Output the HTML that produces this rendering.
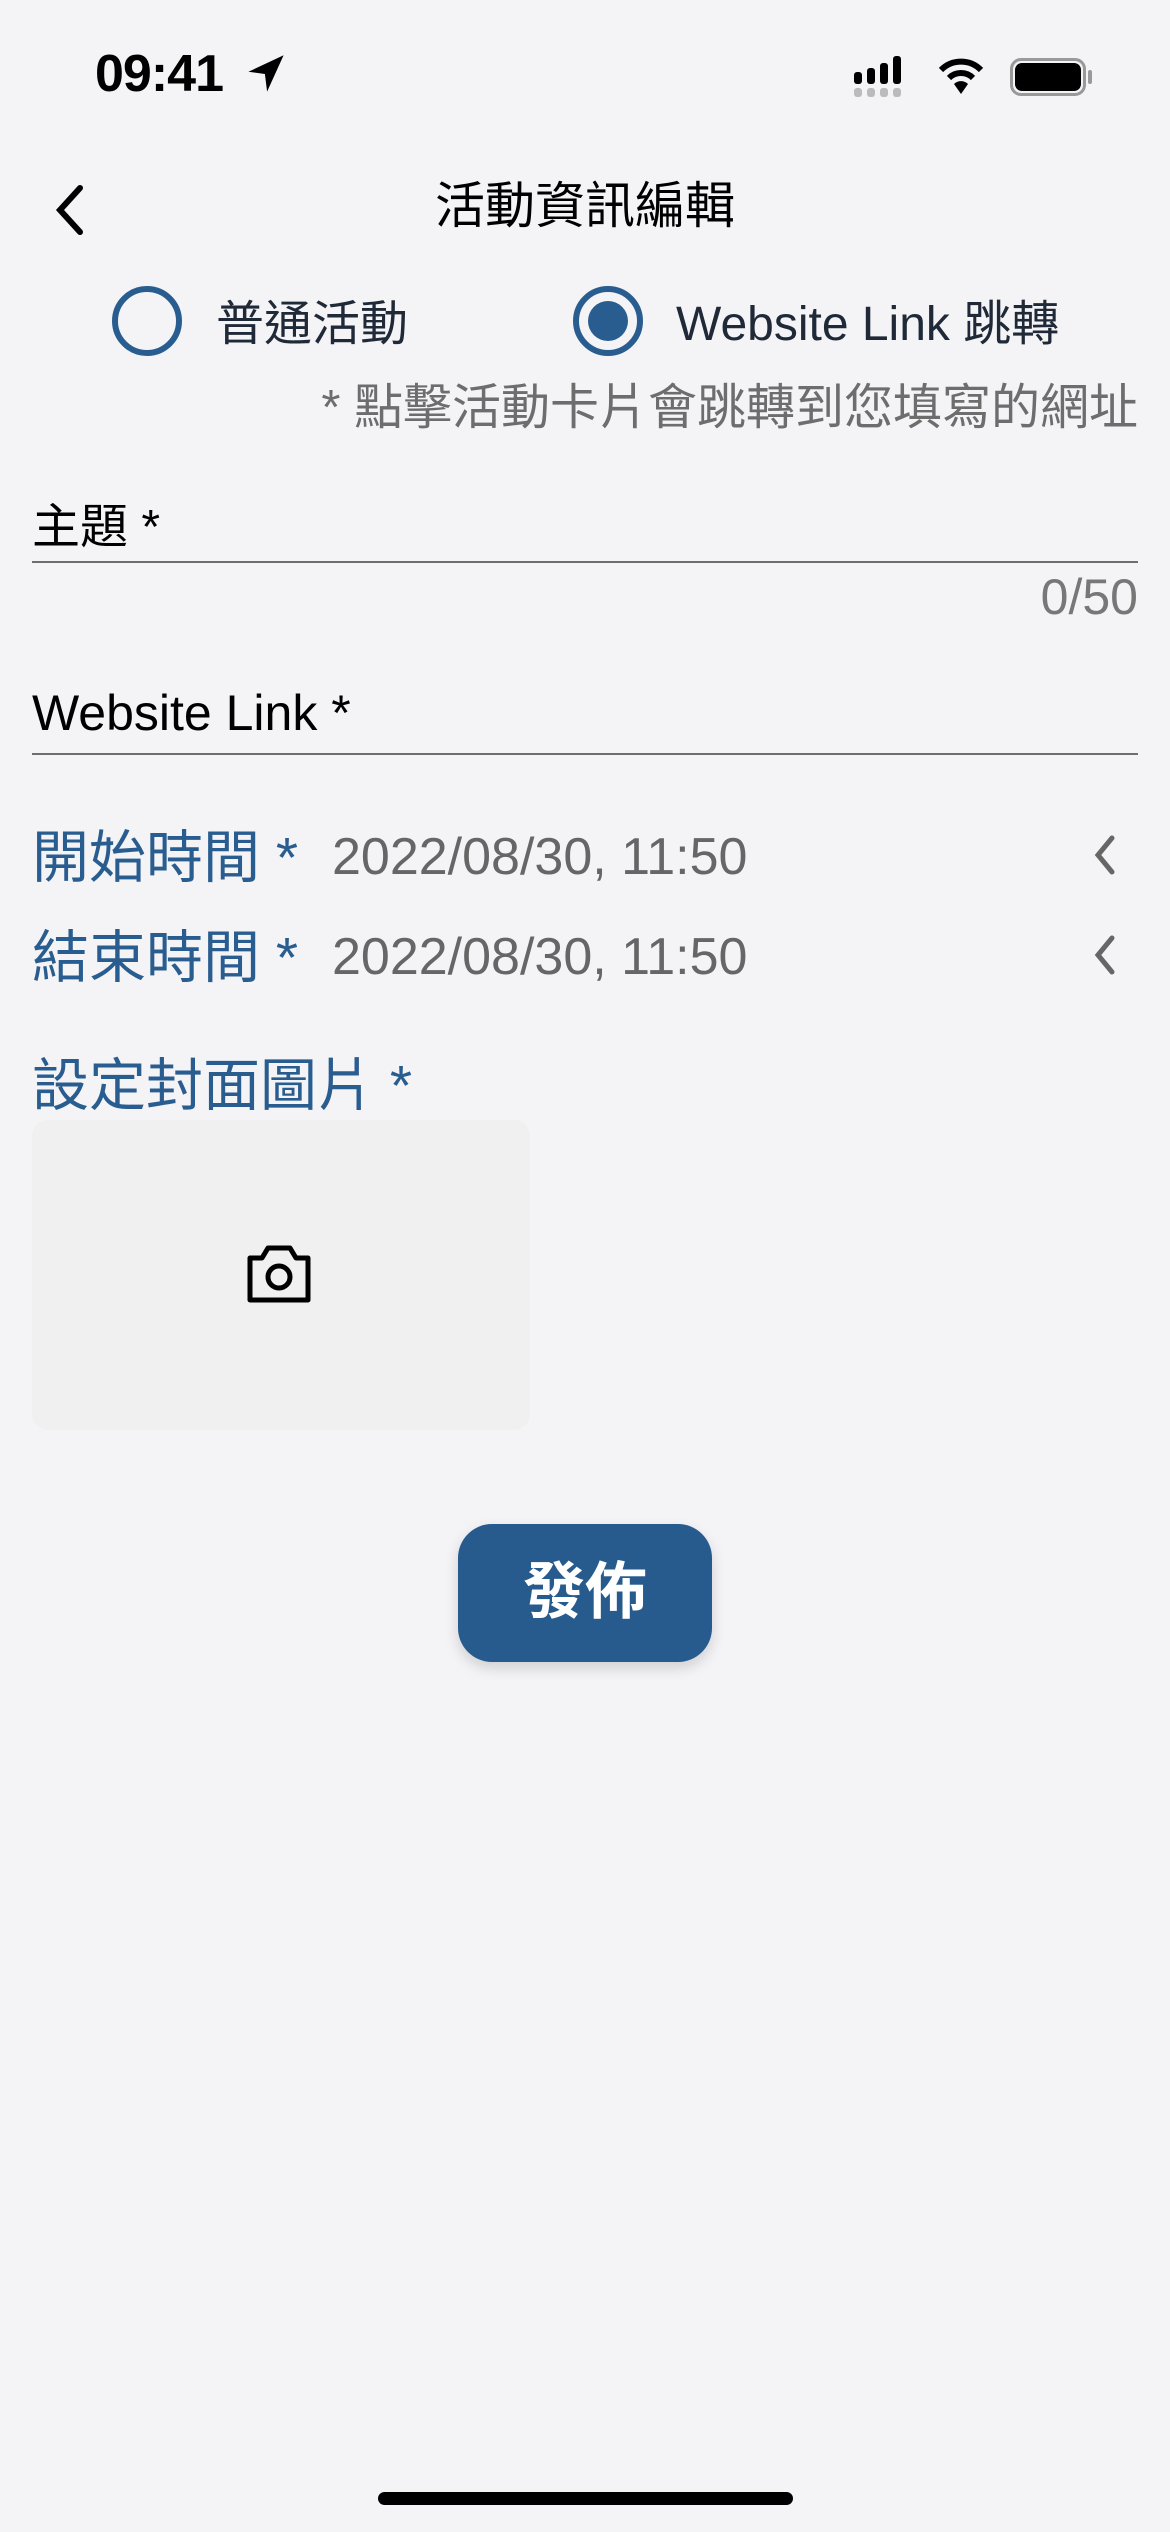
<!DOCTYPE html>
<html><head><meta charset="utf-8"><style>
*{margin:0;padding:0;box-sizing:border-box}
body{width:1170px;height:2532px;background:#f4f4f7;position:relative;overflow:hidden;font-family:"Liberation Sans","Noto Sans CJK TC",sans-serif}
.a{position:absolute;white-space:nowrap}
.line{position:absolute;left:32px;width:1106px;height:2px;background:#6e6e6e}
.blue{color:#2a5d8f}
.grey{color:#666}
</style></head><body>
<div class="a" style="left:95px;top:44px;font-size:52px;font-weight:bold;color:#000;letter-spacing:-1px">09:41</div>
<svg class="a" style="left:244px;top:52px" width="44" height="44" viewBox="0 0 40 40"><path d="M36 3 L4 18 L19 20 L21 36 Z" fill="#000"/></svg>
<svg class="a" style="left:854px;top:56px" width="62" height="42" viewBox="0 0 62 42"><rect x="0" y="16" width="8" height="12" rx="3" fill="#000"/><rect x="13" y="12" width="8" height="16" rx="3" fill="#000"/><rect x="26" y="7" width="8" height="21" rx="3" fill="#000"/><rect x="39" y="0" width="8" height="28" rx="3" fill="#000"/><rect x="0" y="32" width="8" height="9" rx="3" fill="#bbb"/><rect x="13" y="32" width="8" height="9" rx="3" fill="#bbb"/><rect x="26" y="32" width="8" height="9" rx="3" fill="#bbb"/><rect x="39" y="32" width="8" height="9" rx="3" fill="#bbb"/></svg>
<svg class="a" style="left:938px;top:56px" width="46" height="40" viewBox="0 0 46 40"><path d="M3 14 A28 28 0 0 1 43 14" stroke="#000" stroke-width="6" fill="none"/><path d="M11 22 A17 17 0 0 1 35 22" stroke="#000" stroke-width="6" fill="none"/><path d="M16 28 L23 38 L30 28 A10 10 0 0 0 16 28Z" fill="#000"/></svg>
<div class="a" style="left:1010px;top:58px;width:76px;height:38px;border:3px solid #999;border-radius:11px"></div>
<div class="a" style="left:1015px;top:63px;width:66px;height:28px;background:#000;border-radius:7px"></div>
<div class="a" style="left:1088px;top:70px;width:4px;height:14px;background:#999;border-radius:2px"></div>

<svg class="a" style="left:48px;top:182px" width="40" height="56" viewBox="0 0 40 56"><path d="M32 6 L12 28 L32 50" stroke="#000" stroke-width="6" fill="none" stroke-linecap="round"/></svg>
<div class="a" style="left:0;width:1170px;text-align:center;top:166px;font-size:50px;color:#000">活動資訊編輯</div>

<div class="a" style="left:112px;top:286px;width:70px;height:70px;border:6px solid #2a5d8f;border-radius:50%"></div>
<div class="a" style="left:216px;top:284px;font-size:48px;color:#1f2937">普通活動</div>
<div class="a" style="left:573px;top:286px;width:70px;height:70px;border:6px solid #2a5d8f;border-radius:50%"></div>
<div class="a" style="left:588px;top:301px;width:40px;height:40px;background:#2a5d8f;border-radius:50%"></div>
<div class="a" style="left:676px;top:284px;font-size:48px;color:#1f2937">Website Link 跳轉</div>
<div class="a" style="right:32px;top:368px;font-size:49px;color:#6d6d6d">* 點擊活動卡片會跳轉到您填寫的網址</div>

<div class="a" style="left:32px;top:487px;font-size:48px;color:#000">主題 *</div>
<div class="line" style="top:561px"></div>
<div class="a" style="right:32px;top:568px;font-size:50px;color:#777">0/50</div>
<div class="a" style="left:32px;top:684px;font-size:50px;color:#000">Website Link *</div>
<div class="line" style="top:753px"></div>

<div class="a blue" style="left:32px;top:812px;font-size:57px">開始時間 *</div>
<div class="a grey" style="left:332px;top:827px;font-size:52px">2022/08/30, 11:50</div>
<svg class="a" style="left:1090px;top:832px" width="30" height="46" viewBox="0 0 30 46"><path d="M22 6 L8 23 L22 40" stroke="#666" stroke-width="5" fill="none" stroke-linecap="round"/></svg>
<div class="a blue" style="left:32px;top:912px;font-size:57px">結束時間 *</div>
<div class="a grey" style="left:332px;top:927px;font-size:52px">2022/08/30, 11:50</div>
<svg class="a" style="left:1090px;top:932px" width="30" height="46" viewBox="0 0 30 46"><path d="M22 6 L8 23 L22 40" stroke="#666" stroke-width="5" fill="none" stroke-linecap="round"/></svg>

<div class="a blue" style="left:32px;top:1040px;font-size:57px">設定封面圖片 *</div>
<div class="a" style="left:32px;top:1120px;width:498px;height:310px;background:#f0f0f0;border-radius:16px"></div>
<svg class="a" style="left:244px;top:1242px" width="70" height="62" viewBox="0 0 70 62"><path d="M6 16 H18 L24 6 H46 L52 16 H64 V58 H6 Z" stroke="#000" stroke-width="5" fill="none" stroke-linejoin="round"/><circle cx="35" cy="35" r="11" stroke="#000" stroke-width="5" fill="none"/></svg>

<div class="a" style="left:458px;top:1524px;width:254px;height:138px;background:#275b8e;border-radius:34px;box-shadow:0 6px 14px rgba(0,0,0,.15);color:#fff;font-size:62px;font-weight:bold;text-align:center;line-height:138px">發佈</div>

<div class="a" style="left:378px;top:2492px;width:415px;height:13px;background:#000;border-radius:7px"></div>
</body></html>
